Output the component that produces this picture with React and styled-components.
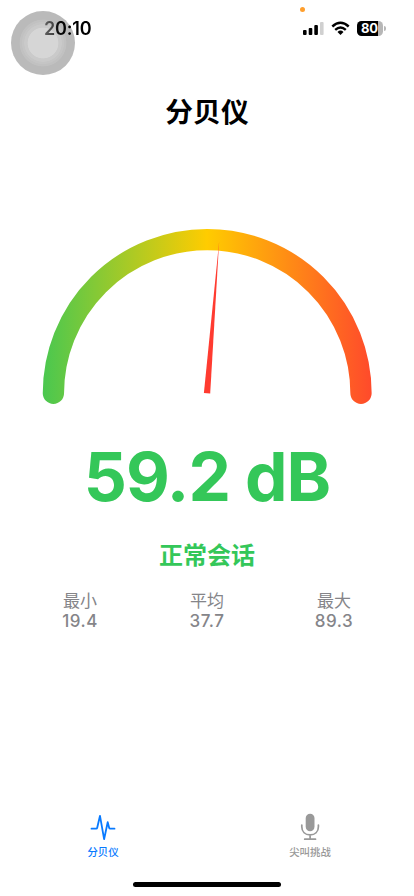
import React from 'react';
import styled, { createGlobalStyle } from 'styled-components';

const GlobalStyle = createGlobalStyle`
  * { box-sizing: border-box; }
  body { margin: 0; background: #fff; }
`;

const Screen = styled.main`
  position: relative;
  width: 414px;
  height: 896px;
  overflow: hidden;
  display: flex;
  flex-direction: column;
  background: #fff;
  font-family: Inter, 'Noto Sans CJK SC', sans-serif;
`;

const StatusBar = styled.header`
  height: 56px;
  flex: none;
  display: flex;
  justify-content: space-between;
  align-items: center;
  padding: 0 28px 0 44px;
`;

const Clock = styled.time`
  position: relative;
  z-index: 1;
  margin-top: 1px;
  font-size: 18px;
  font-weight: 600;
  line-height: 22px;
  letter-spacing: -0.2px;
  background: linear-gradient(90deg, #606060 0, #404040 10px, #111 13px, #000 22px);
  background-clip: text;
  color: transparent;
`;

const StatusIcons = styled.div`
  display: flex;
  align-items: center;
  gap: 7px;
`;

const Battery = styled.div`
  display: flex;
  align-items: center;
  gap: 1px;
`;

const BatteryBody = styled.div`
  width: 26px;
  height: 15px;
  padding-right: 1px;
  border-radius: 4.5px;
  background: linear-gradient(90deg, #000 82%, #b7b7b7 82%);
  color: #fff;
  font-size: 13px;
  font-weight: 700;
  line-height: 15px;
  text-align: center;
`;

const BatteryTip = styled.div`
  width: 2px;
  height: 5px;
  border-radius: 0 2px 2px 0;
  background: #b7b7b7;
`;

const RecordingDot = styled.div`
  position: absolute;
  left: 300px;
  top: 7px;
  width: 5px;
  height: 5px;
  border-radius: 50%;
  background: #ff9f2d;
`;

const AssistiveTouch = styled.div`
  position: absolute;
  left: 11px;
  top: 11px;
  width: 64px;
  height: 64px;
  border-radius: 50%;
  background: radial-gradient(
    circle,
    #d6d6d6 0 15px,
    #cacaca 15.7px 18.5px,
    #c5c5c5 19px 20.7px,
    #c1c1c1 21.3px 23px,
    #bababa 23.7px
  );
`;

const Title = styled.h1`
  margin: 36px 0 0;
  height: 40px;
  flex: none;
  font-size: 27.8px;
  line-height: 40px;
  font-weight: 700;
  text-align: center;
  color: #000;
`;

const Gauge = styled.svg`
  display: block;
  flex: none;
  width: 414px;
  height: 184px;
  margin-top: 93px;
`;

const Reading = styled.div`
  margin-top: 28px;
  height: 80px;
  flex: none;
  font-size: 67.5px;
  line-height: 80px;
  font-weight: 700;
  letter-spacing: -0.95px;
  text-align: center;
  color: #34c759;
  white-space: pre;
`;

const Level = styled.div`
  margin-top: 21px;
  height: 36px;
  flex: none;
  font-size: 24px;
  line-height: 36px;
  font-weight: 700;
  text-align: center;
  color: #34c759;
`;

const Stats = styled.section`
  display: grid;
  grid-template-columns: repeat(3, 127px);
  justify-content: center;
  margin-top: 17px;
`;

const Stat = styled.div`
  display: flex;
  flex-direction: column;
  align-items: center;
  font-size: 17px;
  line-height: 20px;
  color: #858589;
`;

const StatValue = styled.span`
  font-size: 17px;
  font-weight: 500;
  letter-spacing: 0.5px;
`;

const TabBar = styled.nav`
  display: grid;
  grid-template-columns: 1fr 1fr;
  margin-top: auto;
  height: 84px;
  flex: none;
`;

const Tab = styled.div`
  display: flex;
  flex-direction: column;
  align-items: center;
  padding-right: 1px;
  color: ${({ $active }) => ($active ? '#087aff' : '#999')};
  font-size: 10.4px;
  font-weight: 500;
  line-height: 16px;

  svg { display: block; width: 28px; height: 32px; margin-bottom: 1px; }
`;

const HomeIndicator = styled.div`
  position: absolute;
  left: 133px;
  top: 882px;
  width: 148px;
  height: 5px;
  border-radius: 3px;
  background: #000;
`;

const stats = [
  ['最小', '19.4'],
  ['平均', '37.7'],
  ['最大', '89.3'],
];

export default function App() {
  return (
    <Screen>
      <GlobalStyle />
      <StatusBar>
        <Clock>20:10</Clock>
        <StatusIcons>
          <svg width="21" height="14" viewBox="0 0 21 14">
            <rect x="0" y="9" width="3.6" height="5" rx="1" />
            <rect x="5.7" y="7" width="3.6" height="7" rx="1" />
            <rect x="11.3" y="4" width="3.6" height="10" rx="1" />
            <rect x="17" y="1" width="3.6" height="13" rx="1" fill="#d0d0d0" />
          </svg>
          <svg width="19" height="14" viewBox="0 0 19 14">
            <g fill="none" stroke="#000" strokeWidth="2.4">
              <path d="M1.3 5.5Q9.5-2 17.7 5.5" />
              <path d="M4.2 8.8Q9.5 4 14.8 8.8" />
            </g>
            <path d="M6.5 10.9Q9.5 8.3 12.5 10.9L9.5 14Z" />
          </svg>
          <Battery>
            <BatteryBody>80</BatteryBody>
            <BatteryTip />
          </Battery>
        </StatusIcons>
      </StatusBar>
      <Title>分贝仪</Title>
      <Gauge viewBox="0 225 414 184">
        <defs>
          <linearGradient id="level" gradientUnits="userSpaceOnUse" x1="23" y1="0" x2="391" y2="0">
            <stop offset="0" stopColor="#34c759" />
            <stop offset="0.5" stopColor="#ffcc00" />
            <stop offset="1" stopColor="#ff3b30" />
          </linearGradient>
        </defs>
        <path
          d="M53.4 393.3A153.8 153.8 0 0 1 361 393.3"
          fill="none"
          stroke="url(#level)"
          strokeWidth="21.3"
          strokeLinecap="round"
        />
        <path d="M203.9 393L219.1 242L210.2 393.6Z" fill="#ff3b30" />
      </Gauge>
      <Reading>59.2 dB</Reading>
      <Level>正常会话</Level>
      <Stats>
        {stats.map(([label, value]) => (
          <Stat key={label}>
            <span>{label}</span>
            <StatValue>{value}</StatValue>
          </Stat>
        ))}
      </Stats>
      <TabBar>
        <Tab $active>
          <svg viewBox="0 0 28 32">
            <path
              d="M2.5 16.7H7.2Q8 16.7 8.2 15.8L11 3.8L15.1 27.2L18.7 10.2L20.2 16Q20.4 16.7 21.2 16.7H25.5"
              fill="none"
              stroke="currentColor"
              strokeWidth="1.8"
              strokeLinecap="round"
              strokeLinejoin="round"
            />
          </svg>
          <span>分贝仪</span>
        </Tab>
        <Tab>
          <svg viewBox="0 0 28 32">
            <rect x="9.7" y="1.7" width="8.8" height="17.5" rx="4.4" fill="currentColor" />
            <path
              d="M5.8 13V14.7C5.8 19.8 9.2 22.9 14.1 22.9S22.4 19.8 22.4 14.7V13M14.1 22.9V27M8.7 27.2H19.5"
              fill="none"
              stroke="currentColor"
              strokeWidth="1.7"
              strokeLinecap="round"
            />
          </svg>
          <span>尖叫挑战</span>
        </Tab>
      </TabBar>
      <RecordingDot />
      <AssistiveTouch />
      <HomeIndicator />
    </Screen>
  );
}
